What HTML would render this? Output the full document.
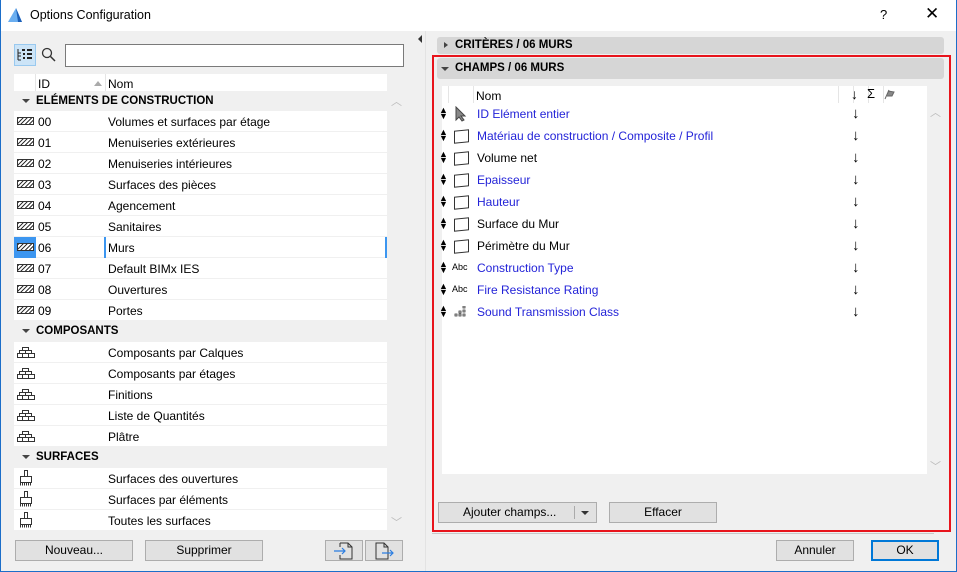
<!DOCTYPE html><html><head><style>
*{box-sizing:border-box;margin:0;padding:0}
body{width:957px;height:572px;position:relative;overflow:hidden;background:#f0f0f0;font-family:"Liberation Sans",sans-serif;font-size:12px;color:#000}
.a{position:absolute}
.row{position:absolute;left:14px;width:373px;height:21px;background:#fff;border-bottom:1px solid #f0f0f0}
.row span{position:absolute;top:4px}
.sec{position:absolute;left:14px;width:373px;height:21px;background:#f0f0f0;font-weight:bold;font-size:11.5px}
.sec span{position:absolute;left:22px;top:4px}
.tri{position:absolute;left:8px;top:8px;width:0;height:0;border-left:4px solid transparent;border-right:4px solid transparent;border-top:4px solid #444}
.hatch{position:absolute;left:3px;top:6px;width:17px;height:8px;border:1px solid #333;background:repeating-linear-gradient(135deg,#333 0 1px,#fff 1px 3px)}
.btn{position:absolute;height:21px;background:#e1e1e1;border:1px solid #adadad;text-align:center;line-height:19px}
.fr{position:absolute;left:442px;width:410px;height:22px}
.fr .t{position:absolute;left:35px;top:4px}
.bl{color:#2323d8}
.ud{position:absolute;left:-3px;top:4px;font-size:9px;line-height:6px}
.ar{position:absolute;left:410px;top:2px;font-size:15px}
.pg{position:absolute;left:12px;top:5px;width:15px;height:13px;border:1px solid #333;transform:skewY(-6deg)}
</style></head><body>
<div class="a" style="left:0;top:0;width:957px;height:31px;background:#fff"></div>
<div class="a" style="left:0;top:0;width:1px;height:572px;background:#1c6ec9"></div>
<div class="a" style="right:0;top:0;width:1px;height:572px;background:#1c6ec9"></div>
<div class="a" style="left:0;bottom:0;width:957px;height:1px;background:#1c6ec9"></div>
<svg class="a" style="left:7px;top:7px" width="16" height="16"><path d="M1 15 L9 1 L15 15 Z" fill="#6aaef0"/><path d="M9 1 L15 15 L11 15 Z" fill="#1b5fb8"/></svg>
<div class="a" style="left:30px;top:8px;font-size:12.5px">Options Configuration</div>
<div class="a" style="left:880px;top:7px;font-size:13px">?</div>
<div class="a" style="left:925px;top:4px;font-size:17px">✕</div>

<div class="a" style="left:14px;top:44px;width:22px;height:22px;background:#cce4f7;border:1px solid #99c9ef"></div>
<svg class="a" style="left:17px;top:48px" width="16" height="14"><path d="M1 1v11M1 5h3M1 8h3M1 12h3" stroke="#222" fill="none"/><path d="M5 2h3M10 2h5M6 6h2M10 6h5M6 10h2M10 10h5" stroke="#222" stroke-width="2"/></svg>
<svg class="a" style="left:41px;top:47px" width="16" height="16"><circle cx="6" cy="6" r="4.5" stroke="#333" fill="none" stroke-width="1.3"/><path d="M9.5 9.5L14 14" stroke="#333" stroke-width="1.5"/></svg>
<div class="a" style="left:65px;top:44px;width:339px;height:23px;background:#fff;border:1px solid #7a7a7a"></div>

<div class="a" style="left:14px;top:74px;width:373px;height:17px;background:#fff"></div>
<div class="a" style="left:35px;top:74px;width:1px;height:17px;background:#e5e5e5"></div>
<div class="a" style="left:105px;top:74px;width:1px;height:17px;background:#e5e5e5"></div>
<div class="a" style="left:38px;top:77px">ID</div>
<div class="a" style="left:94px;top:81px;border-left:4px solid transparent;border-right:4px solid transparent;border-bottom:5px solid #aaa"></div>
<div class="a" style="left:108px;top:77px">Nom</div>
<div class="a" style="left:388px;top:91px;width:16px;height:440px;background:#f0f0f0"></div>
<div class="a" style="left:391px;top:93px;color:#bbb;font-size:11px">︿</div>
<div class="a" style="left:391px;top:514px;color:#bbb;font-size:11px">﹀</div>

<div class="sec" style="top:91px"><div class="tri"></div><span>ELÉMENTS DE CONSTRUCTION</span></div>
<div class="row" style="top:111px"><div class="hatch"></div><span style="left:24px">00</span><span style="left:94px">Volumes et surfaces par étage</span></div>
<div class="row" style="top:132px"><div class="hatch"></div><span style="left:24px">01</span><span style="left:94px">Menuiseries extérieures</span></div>
<div class="row" style="top:153px"><div class="hatch"></div><span style="left:24px">02</span><span style="left:94px">Menuiseries intérieures</span></div>
<div class="row" style="top:174px"><div class="hatch"></div><span style="left:24px">03</span><span style="left:94px">Surfaces des pièces</span></div>
<div class="row" style="top:195px"><div class="hatch"></div><span style="left:24px">04</span><span style="left:94px">Agencement</span></div>
<div class="row" style="top:216px"><div class="hatch"></div><span style="left:24px">05</span><span style="left:94px">Sanitaires</span></div>
<div class="row" style="top:237px"><div class="a" style="left:0;top:0;width:22px;height:21px;background:#3c96f0"></div><div class="hatch"></div><div class="a" style="left:90px;top:0;width:283px;height:21px;border-left:2px solid #3c96f0;border-right:2px solid #3c96f0"></div><span style="left:24px">06</span><span style="left:94px">Murs</span></div>
<div class="row" style="top:258px"><div class="hatch"></div><span style="left:24px">07</span><span style="left:94px">Default BIMx IES</span></div>
<div class="row" style="top:279px"><div class="hatch"></div><span style="left:24px">08</span><span style="left:94px">Ouvertures</span></div>
<div class="row" style="top:300px"><div class="hatch"></div><span style="left:24px">09</span><span style="left:94px">Portes</span></div>
<div class="sec" style="top:321px"><div class="tri"></div><span>COMPOSANTS</span></div>
<svg width="0" height="0" style="position:absolute"><defs><g id="br"><path d="M5.5 2.5h6v3h-6zM2.5 5.5h12v3h-12zM0.5 8.5h17v4h-17zM8.5 5.5v3M5.5 8.5v4M11.5 8.5v4" fill="none" stroke="#333"/></g><g id="bs"><path d="M7.5 0.5h3v6h-3zM3.5 6.5h11v6h-11z" fill="#fff" stroke="#333"/><path d="M3 14h12" stroke="#333" stroke-dasharray="1 1" stroke-width="3"/></g></defs></svg>
<div class="row" style="top:342px"><svg class="a" style="left:3px;top:3px" width="18" height="15"><use href="#br"/></svg><span style="left:94px">Composants par Calques</span></div>
<div class="row" style="top:363px"><svg class="a" style="left:3px;top:3px" width="18" height="15"><use href="#br"/></svg><span style="left:94px">Composants par étages</span></div>
<div class="row" style="top:384px"><svg class="a" style="left:3px;top:3px" width="18" height="15"><use href="#br"/></svg><span style="left:94px">Finitions</span></div>
<div class="row" style="top:405px"><svg class="a" style="left:3px;top:3px" width="18" height="15"><use href="#br"/></svg><span style="left:94px">Liste de Quantités</span></div>
<div class="row" style="top:426px"><svg class="a" style="left:3px;top:3px" width="18" height="15"><use href="#br"/></svg><span style="left:94px">Plâtre</span></div>
<div class="sec" style="top:447px"><div class="tri"></div><span>SURFACES</span></div>
<div class="row" style="top:468px"><svg class="a" style="left:3px;top:2px" width="18" height="17"><use href="#bs"/></svg><span style="left:94px">Surfaces des ouvertures</span></div>
<div class="row" style="top:489px"><svg class="a" style="left:3px;top:2px" width="18" height="17"><use href="#bs"/></svg><span style="left:94px">Surfaces par éléments</span></div>
<div class="row" style="top:510px"><svg class="a" style="left:3px;top:2px" width="18" height="17"><use href="#bs"/></svg><span style="left:94px">Toutes les surfaces</span></div>

<div class="btn" style="left:15px;top:540px;width:118px">Nouveau...</div>
<div class="btn" style="left:145px;top:540px;width:118px">Supprimer</div>
<div class="btn" style="left:325px;top:540px;width:38px"><svg width="22" height="18" style="margin-top:1px"><path d="M7 1h8l4 4v12H7v-4M7 1v4M15 1v4h4" fill="none" stroke="#333"/><path d="M1 9h11M9 6l3 3-3 3" fill="none" stroke="#2a7de1" stroke-width="1.2"/></svg></div>
<div class="btn" style="left:365px;top:540px;width:38px"><svg width="22" height="18" style="margin-top:1px"><path d="M3 1h8l4 4v12H3zM11 1v4h4" fill="none" stroke="#333"/><path d="M9 11h11M17 8l3 3-3 3" fill="none" stroke="#2a7de1" stroke-width="1.2"/></svg></div>

<div class="a" style="left:418px;top:35px;border-top:4px solid transparent;border-bottom:4px solid transparent;border-right:4px solid #333"></div>
<div class="a" style="left:425px;top:31px;width:1px;height:540px;background:#e3e3e3"></div>

<div class="a" style="left:437px;top:37px;width:507px;height:17px;background:#d6d6d6;border-radius:3px"></div>
<div class="a" style="left:444px;top:42px;border-top:3.5px solid transparent;border-bottom:3.5px solid transparent;border-left:4px solid #444"></div>
<div class="a" style="left:455px;top:39px;font-weight:bold;font-size:11.5px">CRITÈRES / 06 MURS</div>
<div class="a" style="left:432px;top:55px;width:519px;height:477px;border:2px solid #e8141c"></div>
<div class="a" style="left:437px;top:58px;width:507px;height:21px;background:#d6d6d6;border-radius:3px"></div>
<div class="a" style="left:441px;top:67px;border-left:4px solid transparent;border-right:4px solid transparent;border-top:4px solid #444"></div>
<div class="a" style="left:455px;top:62px;font-weight:bold;font-size:11.5px">CHAMPS / 06 MURS</div>

<div class="a" style="left:442px;top:86px;width:485px;height:388px;background:#fff"></div>
<div class="a" style="left:448px;top:86px;width:1px;height:17px;background:#e5e5e5"></div>
<div class="a" style="left:473px;top:86px;width:1px;height:17px;background:#e5e5e5"></div>
<div class="a" style="left:838px;top:86px;width:1px;height:17px;background:#e5e5e5"></div>
<div class="a" style="left:853px;top:86px;width:1px;height:17px;background:#e5e5e5"></div>
<div class="a" style="left:868px;top:86px;width:1px;height:17px;background:#e5e5e5"></div>
<div class="a" style="left:883px;top:86px;width:1px;height:17px;background:#e5e5e5"></div>
<div class="a" style="left:476px;top:89px">Nom</div>
<div class="a" style="left:851px;top:86px;font-size:14px">↓</div>
<div class="a" style="left:867px;top:86px;font-size:13px">Σ</div>
<svg class="a" style="left:884px;top:88px" width="12" height="12"><path d="M1 11L5 2M4 3l6 1-2 4-5 0" fill="#888" stroke="#666"/></svg>
<div class="a" style="left:930px;top:104px;color:#bbb;font-size:11px">︿</div>
<div class="a" style="left:930px;top:458px;color:#bbb;font-size:11px">﹀</div>

<div class="fr" style="top:103px"><div class="ud">▲<br>▼</div><svg class="a" style="left:13px;top:3px" width="12" height="16"><path d="M1 1v13l3-3 3 4 2-1-3-4h4z" fill="#888" stroke="#444"/></svg><span class="t bl">ID Elément entier</span><span class="ar">↓</span></div>
<div class="fr" style="top:125px"><div class="ud">▲<br>▼</div><div class="pg"></div><span class="t bl">Matériau de construction / Composite / Profil</span><span class="ar">↓</span></div>
<div class="fr" style="top:147px"><div class="ud">▲<br>▼</div><div class="pg"></div><span class="t">Volume net</span><span class="ar">↓</span></div>
<div class="fr" style="top:169px"><div class="ud">▲<br>▼</div><div class="pg"></div><span class="t bl">Epaisseur</span><span class="ar">↓</span></div>
<div class="fr" style="top:191px"><div class="ud">▲<br>▼</div><div class="pg"></div><span class="t bl">Hauteur</span><span class="ar">↓</span></div>
<div class="fr" style="top:213px"><div class="ud">▲<br>▼</div><div class="pg"></div><span class="t">Surface du Mur</span><span class="ar">↓</span></div>
<div class="fr" style="top:235px"><div class="ud">▲<br>▼</div><div class="pg"></div><span class="t">Périmètre du Mur</span><span class="ar">↓</span></div>
<div class="fr" style="top:257px"><div class="ud">▲<br>▼</div><span class="a" style="left:10px;top:5px;font-size:9px">Abc</span><span class="t bl">Construction Type</span><span class="ar">↓</span></div>
<div class="fr" style="top:279px"><div class="ud">▲<br>▼</div><span class="a" style="left:10px;top:5px;font-size:9px">Abc</span><span class="t bl">Fire Resistance Rating</span><span class="ar">↓</span></div>
<div class="fr" style="top:301px"><div class="ud">▲<br>▼</div><svg class="a" style="left:12px;top:5px" width="14" height="12"><path d="M1 8h2v2H1zM5 8h2v2H5zM9 8h2v2H9zM9 4h2v2H9zM5 5h2v2H5zM9 0h2v2H9z" fill="none" stroke="#333" stroke-width=".8"/></svg><span class="t bl">Sound Transmission Class</span><span class="ar">↓</span></div>

<div class="btn" style="left:438px;top:502px;width:159px;text-align:left;padding-left:24px">Ajouter champs...<div class="a" style="left:135px;top:3px;width:1px;height:13px;background:#aaa"></div><div class="a" style="left:142px;top:8px;border-left:4px solid transparent;border-right:4px solid transparent;border-top:4px solid #333"></div></div>
<div class="btn" style="left:609px;top:502px;width:108px">Effacer</div>
<div class="a" style="left:432px;top:533px;width:502px;height:1px;background:#c8c8c8"></div>
<div class="btn" style="left:776px;top:540px;width:78px">Annuler</div>
<div class="btn" style="left:871px;top:540px;width:68px;border:2px solid #0078d7;line-height:17px">OK</div>
</body></html>
